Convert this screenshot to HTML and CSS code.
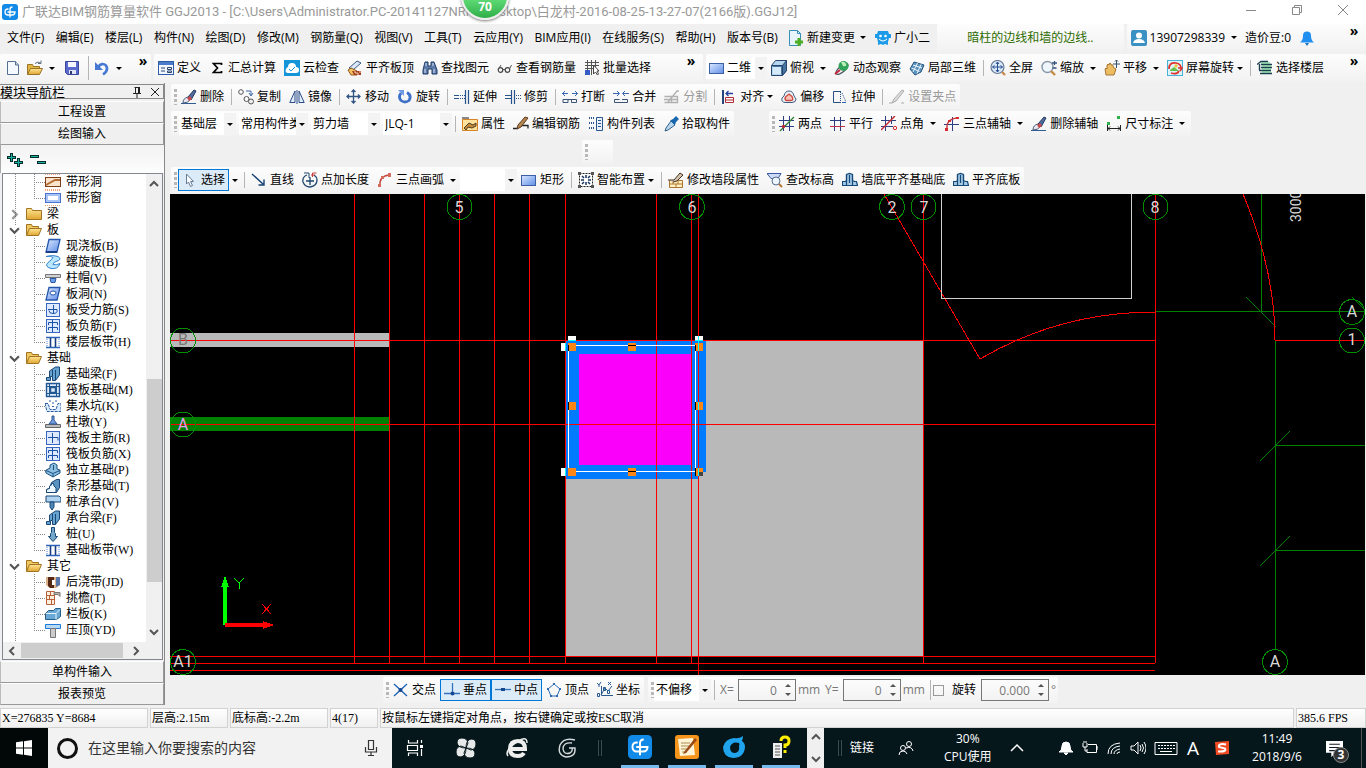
FILE: index.html
```html
<!DOCTYPE html>
<html lang="zh-CN">
<head>
<meta charset="utf-8">
<title>广联达BIM钢筋算量软件 GGJ2013</title>
<link rel="stylesheet" href="styles.css">
</head>
<body>
<svg class="sprite" aria-hidden="true">
<defs>
<linearGradient id="gb" x1="0" y1="0" x2="1" y2="1"><stop offset="0" stop-color="#dbe8ff"/><stop offset="1" stop-color="#5f8ee8"/></linearGradient>
<linearGradient id="gy" x1="0" y1="0" x2="0" y2="1"><stop offset="0" stop-color="#ffe694"/><stop offset="1" stop-color="#e0a530"/></linearGradient>
</defs>
<symbol id="app" viewBox="0 0 16 16"><rect width="16" height="16" rx="3" fill="#128ae8"/><path d="M6.500 5H6Q3 5 3 8t3 3h4Q13 11 13 8H5.500M8 13.500V5.500Q8 3 10.500 3" fill="none" stroke="#fff" stroke-width="1.300"/></symbol>
<symbol id="new" viewBox="0 0 16 16"><path d="M2.500 1.500h8l3 3.500v9.500h-11z" fill="#f4faff" stroke="#56708f"/><path d="M10.500 1.500v3.500h3" fill="#bcd2ee" stroke="#56708f"/></symbol>
<symbol id="open" viewBox="0 0 16 16"><path d="M.5 14.500v-10h5l1 2h6v2" fill="#e2b440" stroke="#9a7428"/><path d="M.5 14.500l3-6h12l-3 6z" fill="url(#gy)" stroke="#9a7428"/><path d="M8 3.500q3-3 6 0m0-3v3h-3" fill="none" stroke="#5a6b7c"/></symbol>
<symbol id="save" viewBox="0 0 16 16"><path d="M1.500 1.500h13v13h-11l-2-2z" fill="#5a69cc" stroke="#39459b"/><path d="M4 2h8v5H4z" fill="#f3f6ff"/><path d="M5 10h7v4H5z" fill="#dfe3f4"/><path d="M6 11h2v3H6z" fill="#313a75"/></symbol>
<symbol id="undo" viewBox="0 0 16 16"><path d="M4 7q4-5 8-1.500 3 5-3 9" fill="none" stroke="#4779d4" stroke-width="2.600"/><path d="M1 2v8h8z" fill="#4779d4"/></symbol>
<symbol id="define" viewBox="0 0 16 16"><rect x=".5" y="1.500" width="15" height="13" fill="#f2f6ff" stroke="#2d5da8"/><path d="M1 2h14v3H1z" fill="#4a7cc9"/><path d="M3 8h4M3 11h4M9.500 7.500h4v2h-4zM9.500 11h4v1.500h-4z" fill="none" stroke="#2b4470"/></symbol>
<symbol id="sigma" viewBox="0 0 16 16"><path d="M12.500 5V3.500H4.500L8.500 8l-4 4.500h8V11" fill="none" stroke="#000" stroke-width="1.700"/></symbol>
<symbol id="cloud" viewBox="0 0 16 16"><rect width="16" height="16" fill="#1495d8"/><path d="M3.500 13Q.5 12 2 9q1-2 2-2q0-4 4-4t4 4q3 0 3 3t-3 3z" fill="#fff"/><path d="M5 9l2 2 4-4" fill="none" stroke="#1495d8"/></symbol>
<symbol id="brick" viewBox="0 0 16 16"><path d="M2 8l8-7 4 2-8 7z" fill="#dbe7f5" stroke="#355682"/><path d="M1 10l3-2 6 3v4H4z" fill="#f3c15f" stroke="#94571e"/><path d="M5 11h9v4H7z" fill="#a33c22"/><path d="M8 11v2h3v2m2-4v2" stroke="#f4d3a5" fill="none"/></symbol>
<symbol id="bino" viewBox="0 0 16 16"><path d="M3 2h3v4h3V2h3l3 8v4h-5v-5H6v5H1v-4z" fill="#5e7ba9" stroke="#1f3b66"/><path d="M3 9v4M12 9v4M4 3v3m7-3v3" stroke="#d6e3f5"/></symbol>
<symbol id="glasses" viewBox="0 0 16 16"><circle cx="3.500" cy="10" r="2.300" fill="none" stroke="#444" stroke-width="1.200"/><circle cx="10.500" cy="10" r="2.300" fill="none" stroke="#444" stroke-width="1.200"/><path d="M6 9.500h2M1.500 9L4 5M12.500 9l2-4" fill="none" stroke="#555"/></symbol>
<symbol id="batch" viewBox="0 0 16 16"><path d="M1 2.500h14M1 5.500h14M1 8.500h8M3.500 0v10M7.500 0v15M11.500 0v7" stroke="#555"/><path d="M1 10h5v5H1z" fill="#345cc4"/><path d="M9.500 5v9l2-2 2 3 1-1-1.500-3h2z" fill="#fff" stroke="#444"/></symbol>
<symbol id="rect" viewBox="0 0 16 16"><rect x=".5" y="3.500" width="14" height="10" fill="url(#gb)" stroke="#3d5fa3"/></symbol>
<symbol id="cube" viewBox="0 0 16 16"><path d="M.5 5.500l4-5h11v10l-4 5h-11z" fill="#b6d6ee" stroke="#26456f"/><path d="M.5 5.500h11v10M11.500 5.500l4-5v10l-4 5" fill="#46749f" stroke="#26456f"/><path d="M2 7h8v7H2z" fill="#d5eaf9"/></symbol>
<symbol id="orbit" viewBox="0 0 16 16"><ellipse cx="8" cy="9" rx="7.500" ry="3" transform="rotate(-40 8 9)" fill="none" stroke="#4e5762" stroke-width="1.300"/><circle cx="9.500" cy="6" r="5" fill="#31a35a"/><path d="M7 2q4-1 5 2t-3 2z" fill="#bdf0b8"/><path d="M1 14l5-4" stroke="#c7283f" stroke-width="2"/></symbol>
<symbol id="part3d" viewBox="0 0 16 16"><path d="M1 9l4-7 10 3-3 7-6 3z" fill="#5d93bd" stroke="#24547f"/><path d="M4 5l9 3M2.500 8l8 3.500M8.500 3L4 12M12 4.500L8 13.500" stroke="#e8f5ff"/></symbol>
<symbol id="full" viewBox="0 0 16 16"><circle cx="7.500" cy="7" r="6.500" fill="#dbe8f8" stroke="#677a96" stroke-width="1.200"/><path d="M7.500 2v10M2.500 7h10M6 4l1.500-2L9 4M6 10l1.500 2L9 10M4.500 5.500L2.500 7l2 1.500M10.500 5.500l2 1.500-2 1.500" fill="none" stroke="#28508f"/><path d="M12 12l3 3" stroke="#c98b4d" stroke-width="2.400"/></symbol>
<symbol id="zoom" viewBox="0 0 16 16"><circle cx="6.500" cy="7" r="5.500" fill="#eef5fb" stroke="#8797a8" stroke-width="1.400"/><path d="M10 11l4 4" stroke="#c58c45" stroke-width="2.400"/><path d="M11 3h5M13.500 1v4M11.500 8h4" stroke="#35537d" stroke-width="1.300"/></symbol>
<symbol id="pan" viewBox="0 0 16 16"><path d="M2 15L1 9q1-2 2 0V5q1-2 2 0v-1q1-2 2 0v1q2-1 2 1l1 2 2 1-2 6z" fill="#edbd62" stroke="#a5773a"/><path d="M12.500 0v8M9 4h7M11 1.500L12.500 0 14 1.500" fill="none" stroke="#36506f"/></symbol>
<symbol id="screen" viewBox="0 0 16 16"><rect x=".5" y=".5" width="15" height="15" fill="#dff3fb" stroke="#49b0d8"/><path d="M2 9q0-7 7-6 5 1 5 5M11 8h4l-2 3M12 11q-2 4-8 2" fill="none" stroke="#e0322c" stroke-width="1.700"/><path d="M3 10l4-3 5 4H3z" fill="#67bf4b"/><circle cx="9" cy="6" r="1.700" fill="#f4c63a"/></symbol>
<symbol id="floors" viewBox="0 0 16 16"><path d="M0 4.500l4-3h7M4 4.500h11M4 7.500h11M2 10.500h12M3 13.500h12M2.500 4v6" fill="none" stroke="#1b3f4f" stroke-width="1.400"/><path d="M4 3h9M5 6h9M5 9h9M5 12h9" stroke="#4ebe72"/></symbol>
<symbol id="brush" viewBox="0 0 16 16"><path d="M0 14.500h15" stroke="#315c93"/><path d="M2 14Q2 9 7 8l2 3q-2 3-7 3z" fill="#e8e8ee" stroke="#4d5d78"/><path d="M7 8l6-7 2 1-5 9z" fill="#526b9d" stroke="#233b64"/><path d="M6 9l3-2 2 3-3 2z" fill="#c84b4b"/></symbol>
<symbol id="copy" viewBox="0 0 16 16"><circle cx="3" cy="3" r="2.300" fill="#fff" stroke="#555"/><circle cx="8.500" cy="10" r="2.500" fill="#fff" stroke="#555"/><circle cx="13" cy="12.500" r="2.500" fill="#eee" stroke="#555"/><path d="M8 2h5v4M11 4l2 3 2-3" fill="none" stroke="#3c69a7"/></symbol>
<symbol id="mirror" viewBox="0 0 16 16"><path d="M6 2v11.500H.8zM10 2v11.500h5.200z" fill="#e4edfb" stroke="#294c88"/><path d="M8 1v14" stroke="#294c88"/></symbol>
<symbol id="move" viewBox="0 0 16 16"><path d="M7.500 1v13M1 7.500h13M5.500 3L7.500 1l2 2M5.500 12l2 2 2-2M3 5.500l-2 2 2 2M12 5.500l2 2-2 2" fill="none" stroke="#315480" stroke-width="1.300"/></symbol>
<symbol id="rotate" viewBox="0 0 16 16"><path d="M4 4Q1 8 4 11.500q4 3 8 0 3-5-2-8" fill="none" stroke="#3d70c9" stroke-width="2.800"/><path d="M1 1h6v6z" fill="#6d9be4"/></symbol>
<symbol id="extend" viewBox="0 0 16 16"><path d="M0 6.500h5M0 9.500h5M14.500 1v14M11.500 1v14" stroke="#27538b" stroke-width="1.200"/><path d="M6 6.500h5M6 9.500h5" stroke="#27538b" stroke-dasharray="1 1"/></symbol>
<symbol id="trim" viewBox="0 0 16 16"><path d="M0 6.500h6M0 9.500h6M6.500 1v14M9.500 1v14" stroke="#27538b" stroke-width="1.200"/><path d="M11 6.500h5M11 9.500h5" stroke="#27538b" stroke-dasharray="1 1"/></symbol>
<symbol id="break" viewBox="0 0 16 16"><path d="M0 4.500h6M10 4.500h6M3 2L.5 4.500 3 7M13 2l2.500 2.500L13 7" fill="none" stroke="#3767af"/><path d="M1 10.500h5v3H1zM9.500 10.500h5v3h-5zM6 10.500h4" fill="none" stroke="#3b5375"/></symbol>
<symbol id="merge" viewBox="0 0 16 16"><path d="M0 4.500h6M10 4.500h6M4 2l2.500 2.500L4 7M12 2L9.500 4.500 12 7" fill="none" stroke="#3767af"/><path d="M1.500 13.500v-3h5M9 10.500h5.500v3h-13" fill="none" stroke="#3b5375"/></symbol>
<symbol id="split" viewBox="0 0 16 16"><path d="M.5 7.500h13v6H.5M0 10.500h14M7.500 7v7M4 13l9-11h2" fill="none" stroke="#b0b0b0" stroke-width="1.300"/></symbol>
<symbol id="align" viewBox="0 0 16 16"><path d="M2 1v14" stroke="#25477b" stroke-width="2"/><path d="M4.500 8.500h8v5h-8zM4.500 11h8" fill="#fff" stroke="#b12d36"/><path d="M5 4.500h7M7.500 2L5 4.500 7.500 7" fill="none" stroke="#2541a0" stroke-width="1.300"/></symbol>
<symbol id="offset" viewBox="0 0 16 16"><path d="M4 13.500Q0 13 1 9l2-2q1-5 5-5t5 5l2 3q0 3.500-4 3.500z" fill="#edf3fa" stroke="#3d5d82"/><path d="M5 11.500q-2-2 0-4L8 5l3 2.500q2 4-1 4z" fill="#f9c2b8" stroke="#cc493e" stroke-width="1.300"/></symbol>
<symbol id="stretch" viewBox="0 0 16 16"><path d="M9 2.500H1.500v11H9" fill="none" stroke="#284e80"/><path d="M8.500 3v11M10 4l4 9" stroke="#284e80" stroke-dasharray="1 1"/><path d="M10 13.500h4" fill="none" stroke="#2f65ae"/></symbol>
<symbol id="grip" viewBox="0 0 16 16"><path d="M5 10l8-9 2 1-8 10-4 2zM0 14h3M12 14h3" fill="#ddd" stroke="#aaa"/></symbol>
<symbol id="prop" viewBox="0 0 16 16"><path d="M.5 3.500h15v11H.5z" fill="#ffe29c" stroke="#d78524"/><path d="M0 1h7v2H0z" fill="#888"/><path d="M2 12l5-5 4 2 3-2v3l-4 2-4-1-2 3z" fill="#c78c39" stroke="#4b3c26"/></symbol>
<symbol id="editbar" viewBox="0 0 16 16"><path d="M0 12.500h4l3-3h8v3" fill="none" stroke="#222" stroke-width="1.300"/><path d="M5 9l7-8 3 1-7 9-4 2z" fill="#b3864e" stroke="#5d3920"/></symbol>
<symbol id="list" viewBox="0 0 16 16"><path d="M1 2h3M1 7h3M1 12h3M5 2h2M5 7h2M5 12h2" stroke="#29568f" stroke-width="2" stroke-dasharray="1 1"/><path d="M8.500 1.500h6v13h-6z" fill="#eaf1fb" stroke="#29568f"/><path d="M10 4.500h3M10 7.500h3M10 10.500h3" stroke="#29568f"/></symbol>
<symbol id="pick" viewBox="0 0 16 16"><path d="M8 5l4 4-7 5-3 1 1-3z" fill="#b9d7ef" stroke="#345f86"/><path d="M8 4l2-1 3-3 3 3-3 3-1 3-5-5z" fill="#1768af"/></symbol>
<symbol id="axis" viewBox="0 0 16 16"><path d="M0 4.500h15M0 10.500h15M4.500 0v15M10.500 0v15" stroke="#2c3f82"/><path d="M1 15L15 1" stroke="#2f7d35" stroke-width="1.200"/><circle cx="4.500" cy="10.500" r="1.700" fill="#bf2835"/></symbol>
<symbol id="parallel" viewBox="0 0 16 16"><path d="M0 4.500h15M4.500 1v14M10.500 1v14" stroke="#2c3f82"/><path d="M0 10.500h15" stroke="#bc3048"/></symbol>
<symbol id="angle" viewBox="0 0 16 16"><path d="M0 4.500h15M0 10.500h12M4.500 0v15M10.500 0v8" stroke="#2c3f82"/><path d="M0 14L14 0" stroke="#c52b34" stroke-width="1.500"/><circle cx="14" cy="12" r="1.700" fill="none" stroke="#d52929"/></symbol>
<symbol id="arcaxis" viewBox="0 0 16 16"><path d="M0 8.500h15M8.500 1v14" stroke="#2c3f82"/><path d="M3 13Q2 3 13 2" fill="none" stroke="#c83b41" stroke-width="1.400"/><path d="M1 12h3v3H1zM12 1h3v2h-3zM4 4h3v2H4z" fill="#d62b31"/></symbol>
<symbol id="dim" viewBox="0 0 16 16"><path d="M1.500 9v6M14.500 9v6M2 12.500h12M4 10.500l-2 2 2 2M12 10.500l2 2-2 2" fill="none" stroke="#222"/><path d="M1 6h3v3H1zM11 0h3v3h-3z" fill="#31af49"/></symbol>
<symbol id="arrow" viewBox="0 0 16 16"><path d="M4.500 2v10l2-2 2 4.500 2-1-2-4h3z" fill="#f8fbff" stroke="#687c98"/></symbol>
<symbol id="line" viewBox="0 0 16 16"><path d="M1 2l11 10M7.500 13H13V7.500" fill="none" stroke="#15406f" stroke-width="1.400"/></symbol>
<symbol id="circlen" viewBox="0 0 16 16"><path d="M5 3q-5 2-4 7 2 5 7 5 7-1 7-7 0-3-3-5M8 5v8M4 9h8" fill="none" stroke="#20466f" stroke-width="1.300"/><path d="M2 1h5v5" fill="none" stroke="#20466f"/><path d="M10.500 5V1h4M9 3h4" fill="none" stroke="#c93c3c"/></symbol>
<symbol id="arc" viewBox="0 0 16 16"><path d="M3 14Q2 4 12 3" fill="none" stroke="#be4438" stroke-width="1.400"/><path d="M1 12h3v3H1zM11 1h3v4h-3zM4 4h3v3H4z" fill="#d46b5d"/></symbol>
<symbol id="smart" viewBox="0 0 16 16"><rect x="1.500" y="1.500" width="13" height="13" fill="#fff" stroke="#222" stroke-dasharray="2 1"/><path d="M8 3v3M8 10v3M3 8h3M10 8h3M4 4l2 2M12 4l-2 2M4 12l2-2M12 12l-2-2" stroke="#17345f" stroke-width="1.500"/><path d="M0 0h3v3H0zM13 0h3v3h-3zM0 13h3v3H0zM13 13h3v3h-3z" fill="#555"/></symbol>
<symbol id="wall" viewBox="0 0 16 16"><path d="M1.500 8.500h13v7h-13zM1 12h14M5 8v4M10 8v4M8 12v4" fill="#fff1c0" stroke="#b17232"/><path d="M0 8h6l6-7 3 2-6 6-4 1" fill="#d3c2ad" stroke="#443321"/></symbol>
<symbol id="level" viewBox="0 0 16 16"><path d="M0 1.500h14l-3 5H4z" fill="#cedcf5" stroke="#38599f"/><circle cx="9" cy="9" r="4" fill="#edf6ff" stroke="#566b8d"/><path d="M12 12l3 3" stroke="#b57636" stroke-width="2"/></symbol>
<symbol id="base" viewBox="0 0 16 16"><path d="M.5 13.500v-4h3l1-1v-6l3-1 3 1v6l2 1h2l1 4z" fill="#a4cae7" stroke="#174978" stroke-width="1.200"/><path d="M4.500 3v10.500M7.500 3v8M10.500 3v10.500" fill="none" stroke="#174978" stroke-width="1.200"/></symbol>
<symbol id="cross" viewBox="0 0 16 16"><path d="M1 2l13 12M14 2L1 14" stroke="#1c61b4" stroke-width="1.300"/><circle cx="7.500" cy="8" r="2" fill="#16478f"/></symbol>
<symbol id="perp" viewBox="0 0 16 16"><path d="M0 11.500h16M8.500 1v11" stroke="#3474bc" stroke-width="1.300"/><circle cx="8.500" cy="11.500" r="2" fill="#16478f"/></symbol>
<symbol id="mid" viewBox="0 0 16 16"><path d="M0 7.500h16" stroke="#3474bc" stroke-width="1.300"/><path d="M6 6h4v3H6z" fill="#16478f"/></symbol>
<symbol id="vertex" viewBox="0 0 16 16"><path d="M8 2l6 5-3 7H5L2 7z" fill="none" stroke="#2e6bb5"/><path d="M7 1h2v2H7zM1 6h2v2H1zM13 6h2v2h-2zM4 13h2v2H4zM10 13h2v2h-2z" fill="#2e6bb5"/></symbol>
<symbol id="coord" viewBox="0 0 16 16"><path d="M4.500 4v9.500H16M4 13l4-7 3 3 4-5" fill="none" stroke="#285a91"/><path d="M0 1l2 2 2-3M2 3v2M11 0l3 3m0-3l-3 3M.5 11.500h2v3h-2zM6.500 5.500h2v3h-2zM10.500 8.500h2v3h-2z" fill="none" stroke="#285a91"/></symbol>
<symbol id="folder" viewBox="0 0 16 16"><path d="M.5 13.500v-11h5l1 2h9v9z" fill="url(#gy)" stroke="#a07422"/></symbol>
<symbol id="folderopen" viewBox="0 0 16 16"><path d="M.5 13.500v-11h5l1 2h6v2" fill="#f0c860" stroke="#a07422"/><path d="M.5 13.500l3-7h12l-3 7z" fill="url(#gy)" stroke="#a07422"/></symbol>
<symbol id="stripdoor" viewBox="0 0 16 16"><path d="M0 .5h16M0 15.500h16" stroke="#f5a080" stroke-dasharray="1 1"/><rect x=".5" y="3.500" width="15" height="9" fill="#fbe4cb" stroke="#7c3e16"/><path d="M1 11l9-5h5" fill="none" stroke="#b36c34" stroke-width="2"/></symbol>
<symbol id="stripwin" viewBox="0 0 16 16"><path d="M0 .5h16M0 15.500h16" stroke="#f5a080" stroke-dasharray="1 1"/><rect x=".5" y="3.500" width="15" height="9" fill="#a9c3f8" stroke="#4a73cd"/><rect x="3" y="6" width="10" height="4" fill="#fff"/></symbol>
<symbol id="slab" viewBox="0 0 16 16"><path d="M4 1.500h11L12 14H1z" fill="url(#gb)" stroke="#2356aa" stroke-width="1.300"/><path d="M1 14h11" stroke="#163f85" stroke-width="2"/></symbol>
<symbol id="spiral" viewBox="0 0 16 16"><path d="M1 2.500q7-2 12 0 5 3-2 5-3 1-3 3 3 1 7-1-2 6-9 5-7-2-3-6 4-3 5-5-2-2-7-1z" fill="#b9e6ff" stroke="#3484cc"/></symbol>
<symbol id="cap" viewBox="0 0 16 16"><path d="M.5 4.500h15v3H.5z" fill="#d0d0d0" stroke="#777"/><path d="M5 8.500h6l-1 4H6z" fill="#6f9ee4" stroke="#285aa8"/></symbol>
<symbol id="slabhole" viewBox="0 0 16 16"><path d="M4 1.500h11L12 14H1z" fill="url(#gb)" stroke="#2356aa" stroke-width="1.300"/><ellipse cx="8" cy="7" rx="3" ry="2" fill="#fff" stroke="#2356aa"/></symbol>
<symbol id="bars" viewBox="0 0 16 16"><rect x="1.500" y="1.500" width="13" height="13" fill="#dce9ff" stroke="#3767be"/><path d="M7.500 3v10M3 7.500h10v3" fill="none" stroke="#1b52a9"/></symbol>
<symbol id="barsf" viewBox="0 0 16 16"><rect x="1.500" y="1.500" width="13" height="13" fill="#dce9ff" stroke="#3767be"/><path d="M7.500 2v12M3.500 7V4.500h9V7M3.500 12V9.500h9V12" fill="none" stroke="#1b52a9"/></symbol>
<symbol id="barsl" viewBox="0 0 16 16"><rect x="1.500" y="1.500" width="13" height="13" fill="#dce9ff" stroke="#3767be"/><path d="M8.500 3v8M3 7.500h9q1 4-4 4-4 0-4-3" fill="none" stroke="#1b52a9"/></symbol>
<symbol id="strip" viewBox="0 0 16 16"><path d="M1 3.500h14M1 13.500h14" stroke="#2f63bb" stroke-width="1.400"/><path d="M5.500 4v9M10.500 4v9" stroke="#173d7e" stroke-width="1.600"/><path d="M2 5v7M14 5v7" stroke="#4e85d5" stroke-dasharray="1 1"/></symbol>
<symbol id="beam" viewBox="0 0 16 16"><path d="M1.500 14.500v-3h3V5l6-4h4v8l-4 5.500h-3v-4h-2v4z" fill="#68a2ce" stroke="#154675"/><path d="M7.500 4v6M10.500 4v10" fill="none" stroke="#154675"/></symbol>
<symbol id="raft" viewBox="0 0 16 16"><path d="M1.500 1.500h13v13h-13zM5.500 5.500h5v5h-5z" fill="#dbe9f8" stroke="#205894" stroke-width="1.400"/><path d="M1 4.500h14M1 11.500h14M4.500 1v14M11.500 1v14" fill="none" stroke="#205894"/></symbol>
<symbol id="pit" viewBox="0 0 16 16"><path d="M0 5.500h3l2 6h6l2-6h3v8H2z" fill="#d9ebff" stroke="#2b61a3" stroke-dasharray="3 1"/><path d="M5 2v2M8 4v2M11 2v2M7 8.500h2" stroke="#2b61a3"/></symbol>
<symbol id="pier" viewBox="0 0 16 16"><path d="M.5 10.500h15v3H.5z" fill="#bbb" stroke="#666"/><path d="M7 2h2v4l3 4H4l3-4z" fill="#739cde" stroke="#2c5593"/></symbol>
<symbol id="isol" viewBox="0 0 16 16"><path d="M.5 8.500L5 6V3l4-2 3 2v4l3 1v3l-7 4-7-4z" fill="#8dbfe1" stroke="#1a5280"/><path d="M1 8.500l7 3 7-3M8 12v3M8.500 3v5" fill="none" stroke="#1a5280"/></symbol>
<symbol id="stripf" viewBox="0 0 16 16"><path d="M1.500 14.500v-3l3-1 2-6 5-3h3v8l-3 5z" fill="#5a93c0" stroke="#164776"/><path d="M1.500 14.500v-3l3-1V8l2-1V5.500h2L9 8l2 2v4.500z" fill="#edf7ff" stroke="#164776"/></symbol>
<symbol id="pilecap" viewBox="0 0 16 16"><path d="M1 2h13l2 2v4H1z" fill="#aed2ef" stroke="#164776"/><path d="M5 8h4v5l-2 3-2-3z" fill="#4f88b7" stroke="#164776"/></symbol>
<symbol id="pile" viewBox="0 0 16 16"><path d="M6.500 1.500h3v5l1 1v3h2l-4.500 5-4.500-5h2v-3l1-1z" fill="#75a7ca" stroke="#164776"/></symbol>
<symbol id="pour" viewBox="0 0 16 16"><path d="M1 3h14v8l-4 3H5l-4-3z" fill="#dcb18a"/><path d="M3 3h6v11H5l-2-2z" fill="#552814"/><path d="M11 3h4v8l-4 2z" fill="#5777aa"/><path d="M7 6h3v5H7z" fill="#fff"/></symbol>
<symbol id="eave" viewBox="0 0 16 16"><path d="M1.500 1.500h8v13h-8zM2 5.500h7M2 9.500h7M5.500 2v3M4.500 6v3M6.500 10v4" fill="#fff0dd" stroke="#b9623a"/><path d="M9 2.500h6v4l-2-2H9z" fill="#c0b3a0" stroke="#777"/></symbol>
<symbol id="rail" viewBox="0 0 16 16"><path d="M.5 7.500l3-3h5l2-2h5v8l-4 3H.5z" fill="#69a8d5" stroke="#245d88"/><path d="M1 7.500h10v6M11 7.500l4-4" fill="none" stroke="#e3f5ff"/></symbol>
<symbol id="top" viewBox="0 0 16 16"><path d="M.5 2.500h15v4H.5z" fill="#b8d9f3" stroke="#1d7ad6"/><path d="M5.500 6.500h5v9h-5z" fill="#ccc" stroke="#777"/></symbol>
<symbol id="chev" viewBox="0 0 10 10"><path d="M1 3l4 4 4-4" fill="none" stroke="#555" stroke-width="2"/></symbol>
</svg>

<header class="title">
  <svg class="i"><use href="#app"/></svg>
  <h1>广联达BIM钢筋算量软件 GGJ2013 - [C:\Users\Administrator.PC-20141127NRHI\Desktop\白龙村-2016-08-25-13-27-07(2166版).GGJ12]</h1>
  <div class="ball">70</div>
  <button class="wc" aria-label="最小化"><svg viewBox="0 0 12 12"><path d="M1 6.500h10"/></svg></button>
  <button class="wc" aria-label="还原"><svg viewBox="0 0 12 12"><path d="M1.500 3.500h7v7h-7zM3.500 3V1.500h7v7H9"/></svg></button>
  <button class="wc" aria-label="关闭"><svg viewBox="0 0 12 12"><path d="M1 1l10 10M11 1L1 11"/></svg></button>
</header>

<nav class="menubar">
  <div class="menus">
    <div class="words"><button>文件(F)</button><button>编辑(E)</button><button>楼层(L)</button><button>构件(N)</button><button>绘图(D)</button><button>修改(M)</button><button>钢筋量(Q)</button><button>视图(V)</button><button>工具(T)</button><button>云应用(Y)</button><button>BIM应用(I)</button><button>在线服务(S)</button><button>帮助(H)</button><button>版本号(B)</button></div>
    <button class="tb"><svg class="i" viewBox="0 0 16 16"><path d="M1.500 .5h8l3 3v12h-11z" fill="#e7f4fb" stroke="#368db8"/><path d="M9.500 .5v3h3" fill="none" stroke="#368db8"/><path d="M11 8v8M7 12h8" stroke="#4dad25" stroke-width="3"/></svg>新建变更<span class="dd"></span></button>
    <button class="tb"><svg class="i" viewBox="0 0 16 16"><path d="M3 1h10l1 3h2v4h-2l-1 4v3l-3-1-2 1-2-1-3 1v-3L2 8H0V4h2z" fill="#1e9be8"/><circle cx="5.500" cy="6" r="1.300" fill="#fff"/><circle cx="10.500" cy="6" r="1.300" fill="#fff"/><path d="M4 9q4 4 8 0" stroke="#fff" fill="none"/></svg>广小二</button>
  </div>
  <div class="group tip"><a href="#tip">暗柱的边线和墙的边线..</a></div>
  <div class="group user">
    <button class="tb"><svg class="i" viewBox="0 0 16 16"><rect width="16" height="16" rx="2" fill="#3c91c4"/><circle cx="8" cy="5.500" r="3" fill="#fff"/><path d="M2 13q1-4 6-4t6 4z" fill="#fff"/></svg>13907298339<span class="dd"></span></button>
    <span>造价豆:0</span>
    <button class="tb" aria-label="通知"><svg class="i" viewBox="0 0 16 16"><path d="M1 12.500q3-2 3-7 0-4 4-4t4 4q0 5 3 7z" fill="#218ff0"/><path d="M6 13h4l-2 3z" fill="#1b72c9"/></svg></button>
    <button class="more">»</button>
  </div>
</nav>

<div class="toolrow">
  <div class="group file">
    <button class="ib" aria-label="新建"><svg class="i"><use href="#new"/></svg></button>
    <button class="ib" aria-label="打开"><svg class="i"><use href="#open"/></svg><span class="dd"></span></button>
    <button class="ib" aria-label="保存"><svg class="i"><use href="#save"/></svg></button>
    <span class="sep tall"></span>
    <button class="ib" aria-label="撤销"><svg class="i"><use href="#undo"/></svg><span class="dd"></span></button>
    <button class="more">»</button>
  </div>
  <div class="group calc">
    <button class="tb"><svg class="i"><use href="#define"/></svg>定义</button>
    <button class="tb"><svg class="i"><use href="#sigma"/></svg>汇总计算</button>
    <button class="tb"><svg class="i"><use href="#cloud"/></svg>云检查</button>
    <button class="tb"><svg class="i"><use href="#brick"/></svg>平齐板顶</button>
    <button class="tb"><svg class="i"><use href="#bino"/></svg>查找图元</button>
    <button class="tb"><svg class="i"><use href="#glasses"/></svg>查看钢筋量</button>
    <button class="tb"><svg class="i"><use href="#batch"/></svg>批量选择</button>
    <button class="more">»</button>
  </div>
  <div class="group view">
    <label class="combo w61 pic"><svg class="i"><use href="#rect"/></svg><select aria-label="视图模式"><option>二维</option></select></label>
    <button class="tb"><svg class="i"><use href="#cube"/></svg>俯视<span class="dd"></span></button>
    <button class="tb"><svg class="i"><use href="#orbit"/></svg>动态观察</button>
    <button class="tb"><svg class="i"><use href="#part3d"/></svg>局部三维</button>
    <span class="sep"></span>
    <button class="tb"><svg class="i"><use href="#full"/></svg>全屏</button>
    <button class="tb"><svg class="i"><use href="#zoom"/></svg>缩放<span class="dd"></span></button>
    <button class="tb"><svg class="i"><use href="#pan"/></svg>平移<span class="dd"></span></button>
    <button class="tb"><svg class="i"><use href="#screen"/></svg>屏幕旋转<span class="dd tight"></span></button>
    <span class="sep"></span>
    <button class="tb"><svg class="i"><use href="#floors"/></svg>选择楼层</button>
    <button class="more">»</button>
  </div>
</div>

<div class="main">
<aside class="side">
  <div class="sidehead"><span>模块导航栏</span><svg viewBox="0 0 12 12"><path d="M3.500 1.500h5M4.500 1v6M7.500 1v6M8.500 1v6M2 7.500h8M6 8v4"/></svg><svg viewBox="0 0 12 12"><path d="M2 2l8 8M10 2l-8 8"/></svg></div>
  <button class="nav">工程设置</button>
  <button class="nav">绘图输入</button>
  <div class="pm">
    <button aria-label="全部展开"><svg viewBox="0 0 18 16"><path d="M4.500 1v9M0 5.500h9M11.500 6v9M7 10.500h9" stroke="#042c2a" stroke-width="3"/><path d="M4.500 2v7M1 5.500h7M11.500 7v7M8 10.500h7" stroke="#19b5a3"/></svg></button>
    <button aria-label="全部折叠"><svg viewBox="0 0 18 16"><path d="M0 4.500h9M7 10.500h9" stroke="#042c2a" stroke-width="3"/><path d="M1 4.500h7M8 10.500h7" stroke="#19b5a3"/></svg></button>
  </div>
  <div class="treebox">
    <div class="treeview">
      <ul class="tree">
        <li class="leaf"><svg class="i"><use href="#stripdoor"/></svg>带形洞</li>
        <li class="leaf last"><svg class="i"><use href="#stripwin"/></svg>带形窗</li>
        <li class="dir shut"><svg class="tw"><use href="#chev"/></svg><svg class="i"><use href="#folder"/></svg>梁</li>
        <li class="dir"><svg class="tw"><use href="#chev"/></svg><svg class="i"><use href="#folderopen"/></svg>板</li>
        <li class="leaf"><svg class="i"><use href="#slab"/></svg>现浇板(B)</li>
        <li class="leaf"><svg class="i"><use href="#spiral"/></svg>螺旋板(B)</li>
        <li class="leaf"><svg class="i"><use href="#cap"/></svg>柱帽(V)</li>
        <li class="leaf"><svg class="i"><use href="#slabhole"/></svg>板洞(N)</li>
        <li class="leaf"><svg class="i"><use href="#barsl"/></svg>板受力筋(S)</li>
        <li class="leaf"><svg class="i"><use href="#barsf"/></svg>板负筋(F)</li>
        <li class="leaf last"><svg class="i"><use href="#strip"/></svg>楼层板带(H)</li>
        <li class="dir"><svg class="tw"><use href="#chev"/></svg><svg class="i"><use href="#folderopen"/></svg>基础</li>
        <li class="leaf"><svg class="i"><use href="#beam"/></svg>基础梁(F)</li>
        <li class="leaf"><svg class="i"><use href="#raft"/></svg>筏板基础(M)</li>
        <li class="leaf"><svg class="i"><use href="#pit"/></svg>集水坑(K)</li>
        <li class="leaf"><svg class="i"><use href="#pier"/></svg>柱墩(Y)</li>
        <li class="leaf"><svg class="i"><use href="#bars"/></svg>筏板主筋(R)</li>
        <li class="leaf"><svg class="i"><use href="#barsf"/></svg>筏板负筋(X)</li>
        <li class="leaf"><svg class="i"><use href="#isol"/></svg>独立基础(P)</li>
        <li class="leaf"><svg class="i"><use href="#stripf"/></svg>条形基础(T)</li>
        <li class="leaf"><svg class="i"><use href="#pilecap"/></svg>桩承台(V)</li>
        <li class="leaf"><svg class="i"><use href="#beam"/></svg>承台梁(F)</li>
        <li class="leaf"><svg class="i"><use href="#pile"/></svg>桩(U)</li>
        <li class="leaf last"><svg class="i"><use href="#strip"/></svg>基础板带(W)</li>
        <li class="dir"><svg class="tw"><use href="#chev"/></svg><svg class="i"><use href="#folderopen"/></svg>其它</li>
        <li class="leaf"><svg class="i"><use href="#pour"/></svg>后浇带(JD)</li>
        <li class="leaf"><svg class="i"><use href="#eave"/></svg>挑檐(T)</li>
        <li class="leaf"><svg class="i"><use href="#rail"/></svg>栏板(K)</li>
        <li class="leaf last"><svg class="i"><use href="#top"/></svg>压顶(YD)</li>
      </ul>
      <div class="vbar"><svg class="up"><use href="#chev"/></svg><i></i><svg><use href="#chev"/></svg></div>
    </div>
    <div class="hbar"><svg class="lf"><use href="#chev"/></svg><i></i><svg class="rt"><use href="#chev"/></svg></div>
  </div>
  <button class="nav">单构件输入</button>
  <button class="nav">报表预览</button>
</aside>

<section class="work">
  <div class="toolrow edit">
    <div class="group">
      <span class="gripper"></span>
      <button class="tb"><svg class="i"><use href="#brush"/></svg>删除</button><span class="sep"></span>
      <button class="tb"><svg class="i"><use href="#copy"/></svg>复制</button>
      <button class="tb"><svg class="i"><use href="#mirror"/></svg>镜像</button><span class="sep"></span>
      <button class="tb"><svg class="i"><use href="#move"/></svg>移动</button>
      <button class="tb"><svg class="i"><use href="#rotate"/></svg>旋转</button><span class="sep"></span>
      <button class="tb"><svg class="i"><use href="#extend"/></svg>延伸</button>
      <button class="tb"><svg class="i"><use href="#trim"/></svg>修剪</button><span class="sep"></span>
      <button class="tb"><svg class="i"><use href="#break"/></svg>打断</button>
      <button class="tb"><svg class="i"><use href="#merge"/></svg>合并</button>
      <button class="tb" disabled><svg class="i"><use href="#split"/></svg>分割</button><span class="sep"></span>
      <button class="tb"><svg class="i"><use href="#align"/></svg>对齐<span class="dd tight"></span></button>
      <button class="tb"><svg class="i"><use href="#offset"/></svg>偏移</button>
      <button class="tb"><svg class="i"><use href="#stretch"/></svg>拉伸</button><span class="sep"></span>
      <button class="tb" disabled><svg class="i"><use href="#grip"/></svg>设置夹点</button>
    </div>
  </div>
  <div class="toolrow parts">
    <div class="group">
      <span class="gripper"></span>
      <label class="combo w57"><select aria-label="楼层"><option>基础层</option></select></label>
      <label class="combo w69"><select aria-label="构件类型"><option>常用构件类型</option></select></label>
      <label class="combo w69"><select aria-label="构件"><option>剪力墙</option></select></label>
      <label class="combo w69"><select aria-label="名称"><option>JLQ-1</option></select></label>
      <span class="sep"></span>
      <button class="tb"><svg class="i"><use href="#prop"/></svg>属性</button>
      <button class="tb"><svg class="i"><use href="#editbar"/></svg>编辑钢筋</button>
      <button class="tb"><svg class="i"><use href="#list"/></svg>构件列表</button>
      <button class="tb"><svg class="i"><use href="#pick"/></svg>拾取构件</button>
    </div>
    <div class="group">
      <span class="gripper"></span>
      <button class="tb"><svg class="i"><use href="#axis"/></svg>两点</button>
      <button class="tb"><svg class="i"><use href="#parallel"/></svg>平行</button>
      <button class="tb"><svg class="i"><use href="#angle"/></svg>点角<span class="dd"></span></button>
      <button class="tb"><svg class="i"><use href="#arcaxis"/></svg>三点辅轴<span class="dd"></span></button>
      <button class="tb"><svg class="i"><use href="#brush"/></svg>删除辅轴</button>
      <button class="tb"><svg class="i"><use href="#dim"/></svg>尺寸标注<span class="dd"></span></button>
    </div>
  </div>
  <div class="toolrow mini"><div class="group"><span class="gripper"></span></div></div>
  <div class="toolrow draw">
    <div class="group">
      <span class="gripper"></span>
      <button class="tb on"><svg class="i"><use href="#arrow"/></svg>选择</button><span class="dd"></span>
      <span class="sep"></span>
      <button class="tb"><svg class="i"><use href="#line"/></svg>直线</button>
      <button class="tb"><svg class="i"><use href="#circlen"/></svg>点加长度</button>
      <button class="tb"><svg class="i"><use href="#arc"/></svg>三点画弧<span class="dd"></span></button>
      <label class="combo w57"><select aria-label="画弧方式"><option></option></select></label>
      <button class="tb"><svg class="i"><use href="#rect"/></svg>矩形</button><span class="sep"></span>
      <button class="tb"><svg class="i"><use href="#smart"/></svg>智能布置<span class="dd tight"></span></button><span class="sep"></span>
      <button class="tb"><svg class="i"><use href="#wall"/></svg>修改墙段属性</button>
      <button class="tb"><svg class="i"><use href="#level"/></svg>查改标高</button>
      <button class="tb"><svg class="i"><use href="#base"/></svg>墙底平齐基础底</button>
      <button class="tb"><svg class="i"><use href="#base"/></svg>平齐底板</button>
    </div>
  </div>

  <div class="canvas">
  <svg class="cad">
    <g transform="translate(-170 -194)" fill="none" stroke-width="1" shape-rendering="crispEdges">
      <path d="M170 333h219v14H170zM566 341h357v315H566z" fill="#b9b9b9"/>
      <path d="M170 417h219v14H170z" fill="#008000"/>
      <path d="M566 341h140v131h-8v7H566z" fill="#007bff"/>
      <path d="M579 354h112v111H579z" fill="#fa00fa"/>
      <path d="M1155 311.500h210M1261.500 194v118M1275.500 340v310M1275 445.500h90M1275 550.500h90M1246 297l30 30M1260 461l30-30M1260 566l30-30M1352 297l12 12" stroke="#008000"/>
      <path d="M354.500 194v469M389.500 194v469M424.500 194v469M459.500 194v469M494.500 194v469M529.500 194v469M565.500 194v469M656.500 194v469M691.500 194v469M698.500 194v481M923.500 194v469M1155.500 194v469M170 340.500h985M1275 340.500h90M170 424.500h985M170 656.500h985M170 663.500h985M170 670.500h985" stroke="#f00"/>
      <path d="M884 194l96 165Q1060 312 1155 312M1243 194Q1275 270 1275 340" stroke="#f00"/>
      <path d="M941.500 194v104.500h190V194" stroke="#d0d0d0"/>
      <path d="M568.500 345.500h127v126h-127z" stroke="#fff"/>
      <g fill="#ff8614">
        <path d="M568 343h8v8h-8zM568 402h8v8h-8zM568 468h8v8h-8zM628 343h8v8h-8zM628 468h8v8h-8zM695 343h8v8h-8zM695 402h8v8h-8zM695 468h8v8h-8z"/>
      </g>
      <path d="M628 345.500h8M628 471.500h8M568.500 345v6M568.500 402v8M695.500 345v6M695.500 402v8M695.500 468v8" stroke="#000"/>
      <path d="M561 343h4v8h-4zM561 468h4v8h-4zM568 336h8v4h-8zM695 336h8v4h-8z" fill="#fff"/>
      <path d="M568 340.500h8M695 340.500h8M565.500 343v8M565.500 468v8M698.500 336v15M698.500 402v8M698.500 468v8" stroke="#0ff"/>
      <path d="M699 472h4v4h-4z" fill="#444"/>
      <g stroke="#008f00">
        <circle cx="459.500" cy="207" r="12.500"/><circle cx="692" cy="207" r="12.500"/><circle cx="892" cy="207" r="12.500"/><circle cx="923.500" cy="207" r="12.500"/><circle cx="1155.500" cy="207" r="12.500"/><circle cx="1352" cy="312" r="12.500"/><circle cx="1352" cy="340.500" r="12.500"/><circle cx="183" cy="340.500" r="12.500"/><circle cx="183" cy="424.500" r="12.500"/><circle cx="183" cy="662" r="12.500"/><circle cx="1275" cy="662" r="12.500"/>
      </g>
      <path d="M225 582v43" stroke="#0f0" stroke-width="4"/><path d="M225 576l4 11h-8z" fill="#0f0"/>
      <path d="M225 625h39" stroke="#f00" stroke-width="4"/><path d="M274 625l-11-4v8z" fill="#f00"/>
      <g class="lbl">
        <text x="459" y="213">5</text><text x="692" y="213">6</text><text x="892" y="213">2</text><text x="924" y="213">7</text><text x="1155" y="213">8</text><text x="1352" y="317">A</text><text x="1352" y="345">1</text><text x="183" y="345" class="dim">B</text><text x="183" y="430" class="pink">A</text><text x="183" y="667">A1</text><text x="1275" y="667">A</text>
        <text transform="translate(1301 222) rotate(-90)" class="start">3000</text>
      </g>
      <path d="M234 578l5 5 5-5M239 583v6" stroke="#0f0"/><path d="M262 604l9 10M271 604l-9 10" stroke="#f00"/>
    </g>
  </svg>
  </div>

  <div class="toolrow snap">
    <div class="group">
      <span class="gripper"></span>
      <button class="tb"><svg class="i"><use href="#cross"/></svg>交点</button>
      <button class="tb on"><svg class="i"><use href="#perp"/></svg>垂点</button>
      <button class="tb on"><svg class="i"><use href="#mid"/></svg>中点</button>
      <button class="tb"><svg class="i"><use href="#vertex"/></svg>顶点</button>
      <button class="tb"><svg class="i"><use href="#coord"/></svg>坐标</button>
    </div>
    <div class="group">
      <span class="gripper"></span>
      <label class="combo w57"><select aria-label="偏移方式"><option>不偏移</option></select></label>
      <span class="sep"></span>
      <label class="num" for="ox">X=</label><span class="spin"><input id="ox" value="0"></span><span class="unit">mm</span>
      <label class="num" for="oy">Y=</label><span class="spin"><input id="oy" value="0"></span><span class="unit">mm</span>
      <span class="sep"></span>
      <label class="check"><input type="checkbox">旋转</label>
      <span class="spin wide"><input aria-label="旋转角度" value="0.000"></span><span class="unit">°</span>
    </div>
  </div>
</section>
</div>

<footer class="status">
  <span class="s1">X=276835 Y=8684</span><span class="s2">层高:2.15m</span><span class="s3">底标高:-2.2m</span><span class="s4">4(17)</span><span class="s5">按鼠标左键指定对角点，按右键确定或按ESC取消</span><span class="s6">385.6 FPS</span>
</footer>

<div class="taskbar">
  <button class="start-btn" aria-label="开始"><svg viewBox="0 0 16 16"><path d="M0 2.300L7 1.300V7.500H0zM8 1.200L16 0V7.500H8zM0 8.500h7v6.200L0 13.700zM8 8.500h8V16l-8-1.200z" fill="#fff"/></svg></button>
  <label class="search"><span class="ring"></span><input placeholder="在这里输入你要搜索的内容" aria-label="搜索"><svg viewBox="0 0 14 18"><path d="M4.500 1.500h5v9h-5zM1.500 8v5h11V8M7 13v4M4 16.500h6" fill="none" stroke="#333" stroke-width="1.200"/></svg></label>
  <div class="pins">
    <button aria-label="任务视图"><svg viewBox="0 0 24 24"><path d="M5.500 4v3h9V4M5.500 20v-3h9v3M4.500 9.500h10v5h-10zM18.500 4v3M18.500 13v7" fill="none" stroke="#fff" stroke-width="1.200"/><path d="M17 9h3v3h-3z" fill="#fff"/></svg></button>
    <button aria-label="风车"><svg viewBox="0 0 24 24"><g fill="#e6e8e9" stroke="#07181d"><path d="M12 12Q4 12 3 7q0-5 5-5t6 5zM12 12Q12 4 17 3q5 0 5 5t-5 6zM12 12q8 0 9 5 0 5-5 5t-6-5zM12 12q0 8-5 9-5 0-5-5t5-6z"/></g></svg></button>
    <button aria-label="浏览器"><svg viewBox="0 0 24 24"><path d="M5 13h15q0-8-7-8-8 0-8 8 0 7 8 7 4 0 6-3" fill="none" stroke="#eee" stroke-width="4"/><path d="M3 20Q-1 15 12 6q10-7 10 1" fill="none" stroke="#eee" stroke-width="1.500"/></svg></button>
    <button aria-label="旋风"><svg viewBox="0 0 24 24"><path d="M19 4Q8 1 4 9q-3 10 6 12 10 0 9-9h-6M16 7q-9-1-9 6 1 6 7 4 3-2 2-5" fill="none" stroke="#d6dadc" stroke-width="1.400"/></svg></button>
  </div>
  <span class="tsep"></span>
  <div class="pins open">
    <button aria-label="广联达"><svg viewBox="0 0 16 16"><use href="#app"/></svg></button>
    <button aria-label="记事"><svg viewBox="0 0 24 24"><rect width="24" height="24" rx="3" fill="#f5951c"/><path d="M3 4l15-1 2 17-15 1z" fill="#fff4d5"/><path d="M6 8h9M6 11h8M6 14h7M7 17h5" stroke="#a98a55"/><path d="M9 17L20 3l2 2-11 13-3 1z" fill="#9b4a17"/></svg></button>
    <button aria-label="广联达云"><svg viewBox="0 0 24 24"><path d="M21 1Q17 4 12 3 3 4 1 12q0 10 10 11 11 0 12-11 0-4-3-6 1-3 1-5z" fill="#20a4ed"/><path d="M17 8q-7-2-9 4 0 6 5 6 5-1 4-7 1-1 0-3z" fill="#06171c"/></svg></button>
    <button aria-label="帮助"><svg viewBox="0 0 24 24"><path d="M4 8h9v15H4z" fill="#eee"/><path d="M6 11h5M6 14h5M6 17h5M6 20h5" stroke="#555"/><path d="M12 6q0-4 4-4t4 4-4 4v3" fill="none" stroke="#ffef00" stroke-width="3"/><path d="M14.500 15h3v3h-3z" fill="#ffef00"/></svg></button>
  </div>
  <div class="tscroll"><svg class="up"><use href="#chev"/></svg><svg><use href="#chev"/></svg></div>
  <span class="tsep"></span>
  <span class="links">链接</span>
  <svg class="people" viewBox="0 0 16 16"><circle cx="11" cy="4" r="2.500"/><circle cx="5" cy="8" r="2.500"/><path d="M1 15q0-4 4-4 3 0 4 3M8 8q6-2 7 3"/></svg>
  <span class="two cpu">30%<br>CPU使用</span>
  <svg class="caret" viewBox="0 0 16 16"><path d="M2 11l6-6 6 6"/></svg>
  <div class="tray">
    <svg viewBox="0 0 16 16"><path d="M1 12q3-1 3-6 0-4 4-4t4 4q0 5 3 6zM6 13h4l-2 2z" fill="#fff"/></svg>
    <svg viewBox="0 0 16 16"><path d="M6 4.500h8.500v8H5V9M14.500 7H16v3M1 3v4h4V3M2 3V1M4 3V1M3 7v4h2"/></svg>
    <svg viewBox="0 0 16 16"><path d="M2 14Q2 4 14 3M5 14q0-7 9-8M8 14q0-4 6-5M11 14q0-2 3-2"/></svg>
    <svg viewBox="0 0 16 16"><path d="M1 6h3l4-4v12l-4-4H1zM10 5q2 3 0 6M12 4q3 4 0 8M14 2q4 6 0 12"/></svg>
    <svg class="kb" viewBox="0 0 24 16"><path d="M1 2.500h22v12H1zM6 11.500h12"/><path d="M4 5.500h17M4 8.500h17" stroke-dasharray="2 1"/></svg>
    <b>A</b>
    <svg viewBox="0 0 16 16"><path d="M1 2l14-1v13L2 15z" fill="#f04b23" stroke="none"/><path d="M12 4.500Q4 3 5 7l6 1.500q2 3.500-7 3" stroke="#fff" stroke-width="2"/></svg>
  </div>
  <span class="two clock">11:49<br>2018/9/6</span>
  <button class="notice" aria-label="通知 3"><svg viewBox="0 0 16 16"><path d="M0 1h16v11H9l-4 4v-4H0z" fill="#fff"/><path d="M3 4h10M3 7h10M3 10h7" stroke="#101c20"/></svg><span>3</span></button>
</div>
</body>
</html>
```
FILE: styles.css
```css
* { box-sizing: border-box; }
body {
  margin: 0;
  height: 100vh;
  display: flex;
  flex-direction: column;
  overflow: hidden;
  background: #f0f0f0;
  color: #000;
  font: 12px/16px "Open Sans", "Noto Sans CJK SC", sans-serif;
  white-space: nowrap;
}
button, input, select { font: inherit; color: inherit; }
button { border: 0; padding: 0; margin: 0; background: none; }
.sprite { position: absolute; width: 0; height: 0; }
.i { width: 16px; height: 16px; flex: none; }

/* title bar */
.title { position: relative; flex: none; display: flex; align-items: center; height: 24px; padding-left: 2px; background: #fff; color: #999; }
.title h1 { flex: 1; margin: 0 0 0 4px; font: 400 13px/20px Roboto, "Noto Sans CJK SC", sans-serif; }
.ball { position: absolute; left: 461px; top: -28px; width: 48px; height: 48px; padding-top: 25px; border: 2px solid #eee; border-radius: 50%; background: linear-gradient(#5cd873 60%, #2fae48); color: #fff; font-weight: 700; text-align: center; box-shadow: 0 1px 3px #777; z-index: 2; }
.wc { width: 46px; height: 20px; }
.wc svg { width: 12px; height: 12px; fill: none; stroke: #888; }

/* toolbars */
.group { display: flex; align-items: center; align-self: stretch; background: linear-gradient(#fdfdfd, #f2f2f2); border-radius: 2px; }
.toolrow, .menubar { flex: none; display: flex; gap: 3px; }
.menubar { height: 29px; padding-bottom: 2px; }
.menus { flex: none; display: flex; align-items: center; width: 934px; padding-left: 7px; }
.words { display: flex; justify-content: space-between; width: 771px; margin-right: 6px; }
.tb { display: flex; align-items: center; gap: 3px; height: 22px; padding: 0 4px; }
.tb:disabled { color: #999; }
.tb.on { border: 1px solid #0078d7; background: #dcebf8; padding: 0 3px; }
.tip { flex: 187; justify-content: center; }
.tip a { color: #2d6b00; text-decoration: none; }
.user { flex: 240; gap: 4px; }
.more { margin-left: auto; align-self: flex-start; width: 16px; font-size: 14px; font-weight: 700; line-height: 14px; }
.user .more, .view .more { margin-right: 4px; }
.dd { flex: none; width: 12px; height: 3px; }
.dd::before, .combo::after { content: ""; display: block; width: 0; margin: 0 auto; border: 3px solid transparent; border-top-color: #000; border-bottom: 0; }
.tb .dd { margin-left: 2px; width: 7px; }
.tb .dd.tight { margin: 0 -2px 0 -3px; width: 11px; }
.sep { flex: none; width: 1px; height: 16px; margin: 0 2px 0 3px; background: #b5b5b5; }
.sep.tall { height: 24px; margin: 0 5px 0 2px; }
.gripper { flex: none; width: 3px; height: 16px; margin-left: 3px; background: repeating-linear-gradient(#b8b8b8 0 3px, #0000 3px 5px); }
.combo { position: relative; flex: none; display: flex; align-items: center; height: 22px; background: linear-gradient(90deg, #fff calc(100% - 12px), #f3f3f3 0); }
.combo::after { position: absolute; right: 3px; top: 10px; }
.combo select { appearance: none; flex: 1; min-width: 0; height: 22px; padding: 0 0 0 2px; margin-right: 12px; border: 0; background: none; overflow: hidden; }
.combo.pic { padding-left: 3px; }
.w57 { width: 57px; }
.w61 { width: 61px; }
.w69 { width: 69px; }
.parts .combo + .combo { margin-left: 3px; }
body > .toolrow { height: 30px; padding: 1px 0; }
.file { flex: none; width: 151px; padding-left: 5px; }
.ib { display: flex; align-items: center; margin-right: 6px; }
.ib .dd { margin-left: 3px; }
.calc { flex: none; width: 549px; padding-right: 4px; }
.view { flex: 1; }

/* work area */
.main { flex: 1; min-height: 0; display: flex; gap: 5px; }
.work { flex: 1; min-width: 0; display: flex; flex-direction: column; }
.work .toolrow { height: 28px; padding: 1px 0 1px 1px; }
.work .edit { height: 27px; }
.work .parts { gap: 35px; padding-bottom: 2px; }
.parts .gripper { margin-right: 2px; }
.parts .group:last-child { padding-right: 2px; }
.parts .group:last-child .gripper { margin-right: 0; }
.work .mini { justify-content: center; padding: 2px; }
.mini .group { width: 31px; margin-right: 341px; }
.draw .gripper { margin-right: 1px; }
.canvas { flex: 1; min-height: 0; padding-right: 1px; }
.cad { display: block; width: 100%; height: 100%; background: #000; }
.lbl { font: 16px Roboto, sans-serif; text-anchor: middle; shape-rendering: auto; }
.lbl text { fill: #d8d8d8; }
.lbl .dim { fill: #777; }
.lbl .pink { fill: #ee9aee; }
.lbl .start { text-anchor: start; font-size: 14px; }
.work .snap { height: 30px; padding: 2px 0 2px 213px; gap: 4px; }
.num, .unit { color: #777; }
.num { padding: 0 4px 0 3px; }
.unit { padding: 0 2px; }
.snap .sep { height: 20px; }
.spin { position: relative; width: 58px; height: 22px; border: 1px solid #777; }
.spin.wide { width: 68px; }
.spin input { width: 100%; height: 100%; padding: 0 18px 0 0; border: 0; background: none; color: #777; text-align: right; }
.spin::before, .spin::after { content: ""; position: absolute; right: 4px; border: 3px solid transparent; }
.spin::before { top: 1px; border-bottom-color: #555; }
.spin::after { bottom: 1px; border-top-color: #555; }
.check { display: flex; align-items: center; margin-right: 5px; }
.check input { appearance: none; width: 11px; height: 11px; margin: 0 8px 0 0; border: 1px solid #999; }

/* navigation panel */
.side { flex: none; width: 165px; display: flex; flex-direction: column; padding-top: 1px; border-right: 1px solid #888; }
.sidehead { flex: none; display: flex; align-items: center; height: 15px; margin-bottom: 2px; border: 1px solid #888; border-left: 0; font-size: 13px; }
.sidehead span { flex: 1; }
.sidehead svg { width: 12px; height: 12px; margin-right: 6px; fill: none; stroke: #222; }
.sidehead svg:last-child { margin-right: 2px; }
.nav { flex: none; height: 22px; border: 1px solid #999; border-top-color: #fff; border-left-color: #bbb; text-align: center; }
.pm { flex: none; display: flex; align-items: center; gap: 5px; height: 28px; padding: 2px 6px 0; background: linear-gradient(#f2f2f2, #fdfdfd); border-left: 1px solid #aaa; }
.pm svg { display: block; width: 18px; height: 16px; }
.treebox { flex: 1; min-height: 0; display: flex; flex-direction: column; margin: 0 1px 1px 2px; border: 1px solid #828790; background: #fff; }
.treeview { flex: 1; min-height: 0; display: flex; }
.tree { flex: 1; min-width: 0; margin: 0; padding: 0; list-style: none; overflow: hidden; font-family: "Liberation Serif", "Noto Sans CJK SC", serif; background: repeating-linear-gradient(#888 0 1px, #fff 1px 2px) 12px 0 / 1px 100% no-repeat; }
.tree li { display: flex; align-items: center; height: 16px; }
.leaf { padding-left: 42px; gap: 5px; background: repeating-linear-gradient(90deg, #888 0 1px, #0000 1px 2px) 31px 8px / 11px 1px no-repeat, repeating-linear-gradient(#888 0 1px, #0000 1px 2px) 31px 0 / 1px 100% no-repeat; }
.leaf.last { background-size: 11px 1px, 1px 8px; }
.dir { padding-left: 6px; gap: 5px; }
.tw { width: 11px; height: 11px; margin-right: 1px; background: #fff; }
.shut .tw { transform: rotate(-90deg); opacity: .6; }
.vbar, .hbar { flex: none; display: flex; align-items: center; background: #f0f0f0; }
.vbar { flex-direction: column; width: 16px; padding: 5px 0; }
.vbar svg, .hbar svg { width: 10px; height: 10px; }
.vbar i { width: 15px; margin-top: 190px; margin-bottom: auto; height: 203px; background: #cdcdcd; }
.up { transform: rotate(180deg); }
.hbar { height: 17px; padding-left: 4px; }
.hbar i { width: 102px; height: 15px; margin: 0 8px 0 4px; background: #cdcdcd; }
.lf { transform: rotate(90deg); }
.rt { transform: rotate(-90deg); }

/* status bar */
.status { flex: none; display: flex; gap: 2px; height: 23px; padding-top: 3px; font-family: "Liberation Serif", "Noto Sans CJK SC", serif; }
.status span { height: 20px; padding: 0 1px; border: 1px solid #d2d2d2; background: linear-gradient(#fff, #f0f0f0); line-height: 18px; }
.s1 { width: 148px; }
.s2 { width: 78px; }
.s3 { width: 98px; }
.s4 { width: 48px; }
.s5 { flex: 1; }
.s6 { width: 70px; }

/* taskbar */
.taskbar { flex: none; display: flex; align-items: center; height: 40px; background: #06171c; color: #fff; }
.start-btn { width: 48px; height: 40px; background: #020708; }
.start-btn svg { width: 16px; height: 16px; display: block; margin: 0 auto; }
.search { display: flex; align-items: center; width: 344px; height: 40px; padding: 0 14px 0 9px; background: #f2f2f2; }
.ring { width: 21px; height: 21px; border: 3px solid #111; border-radius: 50%; }
.search input { flex: 1; min-width: 0; margin-left: 8px; border: 0; padding: 0 2px; background: none; font-size: 14px; color: #333; }
.search input::placeholder { color: #333; opacity: 1; }
.search svg { width: 14px; height: 18px; }
.pins { display: flex; padding-left: 1px; gap: 7px; }
.pins button { display: flex; align-items: center; justify-content: center; width: 44px; height: 40px; }
.pins svg { width: 24px; height: 24px; }
.tsep { width: 4px; height: 16px; margin: 0 8px; border: solid #3c4a4e; border-width: 0 1px; }
.pins.open { margin-left: 10px; gap: 9px; }
.pins.open button { width: 38px; border-bottom: 3px solid #76b9ed; }
.tscroll { display: flex; flex-direction: column; align-items: center; justify-content: space-between; width: 17px; height: 40px; margin: 0 6px 0 7px; padding: 4px 0; background: #f0f0f0; }
.tscroll svg { width: 10px; height: 10px; }
.people, .caret, .tray svg { flex: none; width: 16px; height: 16px; fill: none; stroke: #fff; }
.people { margin-left: 24px; }
.two { line-height: 18px; text-align: center; }
.cpu { margin: 0 17px 0 30px; }
.caret { stroke-width: 1.5; }
.tray { display: flex; align-items: center; gap: 8px; margin-left: auto; }
.tray svg.kb { width: 24px; }
.tray b { width: 14px; margin: 0 6px 0 0; font-size: 19px; font-weight: 400; text-align: center; }
.clock { width: 54px; margin: 0 20px; }
.notice { position: relative; width: 38px; height: 40px; margin-right: 4px; border-right: 1px solid #555; }
.notice svg { display: block; width: 17px; height: 17px; margin: 0 0 0 2px; }
.notice span { position: absolute; left: 9px; top: 19px; width: 16px; height: 16px; border-radius: 50%; border: 1px solid #888; background: #333; color: #fff; line-height: 14px; font-weight: 700; }
```
